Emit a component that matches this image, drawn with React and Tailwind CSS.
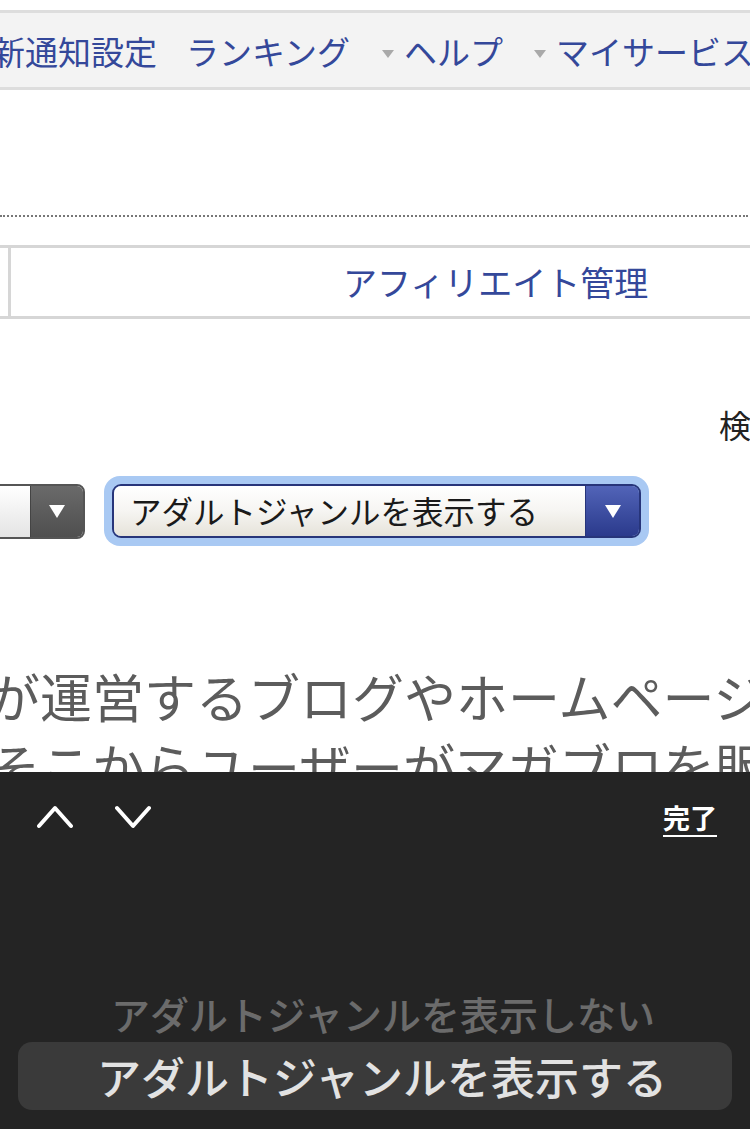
import React from "react";

function NavCaret() {
  return (
    <svg width="12" height="8" viewBox="0 0 12 8" className="shrink-0 mt-[4px]">
      <polygon points="0,0 12,0 6,8" fill="#a9a9a9" />
    </svg>
  );
}

function Chevron({ up }) {
  return (
    <svg width="36" height="24" viewBox="0 0 36 24" fill="none">
      <polyline
        points={up ? "2,21 18,3 34,21" : "2,3 18,21 34,3"}
        stroke="#ffffff"
        strokeWidth="4"
        strokeLinecap="round"
        strokeLinejoin="round"
      />
    </svg>
  );
}

function SelectArrow() {
  return (
    <svg width="16" height="13" viewBox="0 0 16 13">
      <polygon points="0,0 16,0 8,13" fill="#ffffff" />
    </svg>
  );
}

export default function App() {
  return (
    <div className="w-[750px] h-[1129px] overflow-hidden bg-white flex flex-col font-['Noto_Sans_CJK_JP','Noto_Sans',sans-serif]">
      <div className="h-[772px] shrink-0 overflow-hidden flex flex-col">
        <div className="h-[10px] shrink-0" />

        {/* global nav */}
        <nav className="h-[80px] shrink-0 border-y-[3px] border-[#dddddd] bg-[#f3f3f3] flex items-center overflow-hidden">
          <div className="-ml-[8px] mt-[3px] flex items-center whitespace-nowrap text-[33px] leading-none text-[#34489a]">
            <span>新通知設定</span>
            <span className="ml-[29px]">ランキング</span>
            <span className="ml-[32px]"><NavCaret /></span>
            <span className="ml-[10px]">ヘルプ</span>
            <span className="ml-[31px]"><NavCaret /></span>
            <span className="ml-[10px]">マイサービス</span>
          </div>
        </nav>

        <div className="h-[125px] shrink-0" />
        <div className="shrink-0 mr-[2px] border-t-2 border-dotted border-[#777777]" />
        <div className="h-[28px] shrink-0" />

        {/* tab row */}
        <div className="h-[74px] shrink-0 border-y-[3px] border-[#d6d6d6] flex">
          <div className="w-[8px] shrink-0" />
          <div className="flex-1 border-l-[3px] border-[#d6d6d6] flex items-center pl-[332px] whitespace-nowrap text-[34px] leading-none text-[#34489a]">
            アフィリエイト管理
          </div>
        </div>

        <div className="mt-[85px] h-[40px] shrink-0 pl-[719px] whitespace-nowrap text-[32px] leading-[40px] text-[#222222]">
          検索
        </div>

        {/* selects */}
        <div className="mt-[32px] h-[70px] shrink-0 flex items-center">
          <div className="-ml-[60px] w-[145px] h-[55px] shrink-0 rounded-[8px] border-2 border-[#555555] flex overflow-hidden">
            <div className="flex-1 bg-gradient-to-b from-white to-[#e4e4e4]" />
            <div className="w-[53px] bg-gradient-to-b from-[#6a6a6a] to-[#4f4f4f] border-l border-[#444444] flex items-center justify-center">
              <SelectArrow />
            </div>
          </div>

          <div className="ml-[19px] w-[545px] h-[70px] shrink-0 rounded-[16px] bg-[#a9c9f3] p-[8px]">
            <div className="h-full rounded-[9px] border-2 border-[#27357a] flex overflow-hidden">
              <div className="flex-1 bg-gradient-to-b from-white via-[#f6f5f2] to-[#e6e3da] flex items-center pl-[16px] whitespace-nowrap text-[31.5px] leading-none text-[#1a1a1a]">
                アダルトジャンルを表示する
              </div>
              <div className="w-[54px] bg-gradient-to-b from-[#5264b8] to-[#2b3a8c] border-l border-[#27357a] flex items-center justify-center">
                <SelectArrow />
              </div>
            </div>
          </div>
        </div>

        {/* body text */}
        <div className="mt-[115px] -ml-[12px] whitespace-nowrap text-[52px] leading-[70px] text-[#5c5c5c]">
          <div>が運営するブログやホームページから</div>
          <div className="h-[41px] overflow-hidden">そこからユーザーがマガブロを販売</div>
        </div>
      </div>

      {/* picker sheet */}
      <div className="flex-1 bg-[#242424] flex flex-col">
        <div className="h-[90px] shrink-0 flex items-center pl-[37px] pr-[33px]">
          <Chevron up />
          <div className="ml-[42px]">
            <Chevron />
          </div>
          <div className="ml-auto text-[27px] leading-none font-bold text-white underline underline-offset-[6px] decoration-2">
            完了
          </div>
        </div>

        <div className="h-[123px] shrink-0" />
        <div className="h-[56px] shrink-0 flex items-center justify-center pl-[16px] whitespace-nowrap text-[39px] leading-none font-medium text-[#6b6b6b]">
          アダルトジャンルを表示しない
        </div>
        <div className="mt-[1px] mx-[18px] h-[68px] shrink-0 rounded-[14px] bg-[#3a3a3a] flex items-center justify-center pl-[14px] whitespace-nowrap text-[44px] leading-none font-medium text-[#e2e2e2]">
          アダルトジャンルを表示する
        </div>
      </div>
    </div>
  );
}
